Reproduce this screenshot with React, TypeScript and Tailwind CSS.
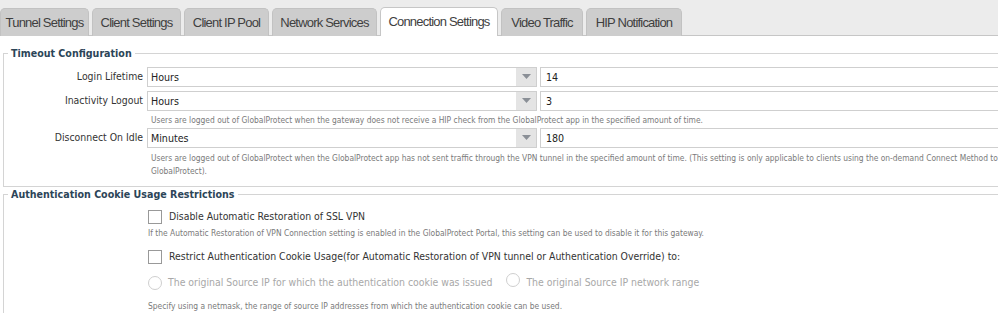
import React from "react";

const tabs = [
  { name: "Tunnel Settings", w: "w-[89px]" },
  { name: "Client Settings", w: "w-[89px]" },
  { name: "Client IP Pool", w: "w-[85px]" },
  { name: "Network Services", w: "w-[105px]" },
  { name: "Connection Settings", w: "w-[118px]", active: true },
  { name: "Video Traffic", w: "w-[82px]" },
  { name: "HIP Notification", w: "w-[96px]" },
];

const body = "font-['Tahoma','DejaVu_Sans_Condensed','Liberation_Sans',sans-serif]";

const SelectRow: React.FC<{ label: string; unit: string; value: string }> = ({
  label,
  unit,
  value,
}) => (
  <div className="flex items-center h-[20px]">
    <div className="w-[143px] pr-[4px] text-right text-[10.4px] text-[#333]">{label}</div>
    <div className="flex h-[20px] w-[390px] border border-[#cfcfcf] bg-white">
      <div className="flex-1 pl-[3px] text-[10.6px] leading-[18px] text-[#222]">{unit}</div>
      <div className="flex w-[20px] items-center justify-center bg-[#e4e4e4]">
        <svg width="9" height="5" viewBox="0 0 9 5">
          <path d="M0 0 L9 0 L4.5 5 Z" fill="#8a8f96" />
        </svg>
      </div>
    </div>
    <div className="ml-[3px] h-[20px] flex-1 border border-[#cfcfcf] border-r-0 bg-white pl-[5px] text-[10.6px] leading-[18px] text-[#222]">
      {value}
    </div>
  </div>
);

const Help: React.FC<{ children: React.ReactNode; className?: string }> = ({ children, className }) => (
  <p className={`pl-[147px] text-[8.4px] leading-[13px] text-[#7a7a7a] ${className ?? ""}`}>{children}</p>
);

const Checkbox = () => (
  <span className="inline-block h-[14px] w-[14px] border border-[#999] bg-white" />
);

const Radio = () => (
  <span className="inline-block h-[14px] w-[14px] rounded-full border border-[#cfcfcf] bg-white" />
);

export default function App() {
  return (
    <div className={`h-[315px] w-[998px] overflow-hidden bg-white ${body}`}>
      <div className="flex h-[36px] items-end gap-[3px] border-b border-[#c6c6c6] bg-[#ececec]">
        {tabs.map((t) => (
          <div
            key={t.name}
            className={`${t.w} -mb-px flex h-[28px] items-center justify-center rounded-t-[5px] border border-b-0 font-['Liberation_Sans_Narrow','Liberation_Sans',sans-serif] text-[13px] tracking-[-0.8px] text-[#3f3f3f] ${
              t.active ? "border-[#c6c6c6] bg-white h-[29px]" : "border-[#c2c2c2] bg-[#cdcdcd] border-b"
            }`}
          >
            {t.name}
          </div>
        ))}
      </div>

      <fieldset className="ml-[3px] mt-[10px] border border-r-0 border-[#d4d4d4] pb-[8px] pt-[5px]">
        <legend className="ml-[4px] px-[3px] text-[10.6px] font-bold text-[#2c4558]">
          Timeout Configuration
        </legend>
        <div className="flex flex-col">
          <SelectRow label="Login Lifetime" unit="Hours" value="14" />
          <div className="h-[4px]" />
          <SelectRow label="Inactivity Logout" unit="Hours" value="3" />
          <Help className="pt-[3px] pb-[1px]">
            Users are logged out of GlobalProtect when the gateway does not receive a HIP check from the GlobalProtect app in the specified amount of time.
          </Help>
          <SelectRow label="Disconnect On Idle" unit="Minutes" value="180" />
          <Help className="pt-[4px] whitespace-nowrap">
            Users are logged out of GlobalProtect when the GlobalProtect app has not sent traffic through the VPN tunnel in the specified amount of time. (This setting is only applicable to clients using the on-demand Connect Method to
          </Help>
          <Help>GlobalProtect).</Help>
        </div>
      </fieldset>

      <fieldset className="ml-[3px] mt-0 border border-r-0 border-b-0 border-[#d4d4d4] pt-[6px]">
        <legend className="ml-[4px] px-[3px] text-[10.6px] font-bold text-[#2c4558]">
          Authentication Cookie Usage Restrictions
        </legend>
        <div className="pl-[144px]">
          <div className="flex items-center gap-[7px] h-[16px]">
            <Checkbox />
            <span className="text-[10.4px] text-[#333]">Disable Automatic Restoration of SSL VPN</span>
          </div>
          <p className="mt-[2px] text-[8.4px] leading-[13px] text-[#7a7a7a]">
            If the Automatic Restoration of VPN Connection setting is enabled in the GlobalProtect Portal, this setting can be used to disable it for this gateway.
          </p>
          <div className="mt-[9px] flex items-center gap-[7px] h-[16px]">
            <Checkbox />
            <span className="text-[10.4px] text-[#333]">
              Restrict Authentication Cookie Usage(for Automatic Restoration of VPN tunnel or Authentication Override) to:
            </span>
          </div>
          <div className="mt-[10px] flex items-center h-[16px] text-[10.4px] text-[#a8a8a8]">
            <Radio />
            <span className="ml-[6px]">The original Source IP for which the authentication cookie was issued</span>
            <span className="ml-[14px]"><Radio /></span>
            <span className="ml-[6px]">The original Source IP network range</span>
          </div>
          <p className="mt-[9px] text-[8.4px] leading-[13px] text-[#7a7a7a]">
            Specify using a netmask, the range of source IP addresses from which the authentication cookie can be used.
          </p>
        </div>
      </fieldset>
    </div>
  );
}
